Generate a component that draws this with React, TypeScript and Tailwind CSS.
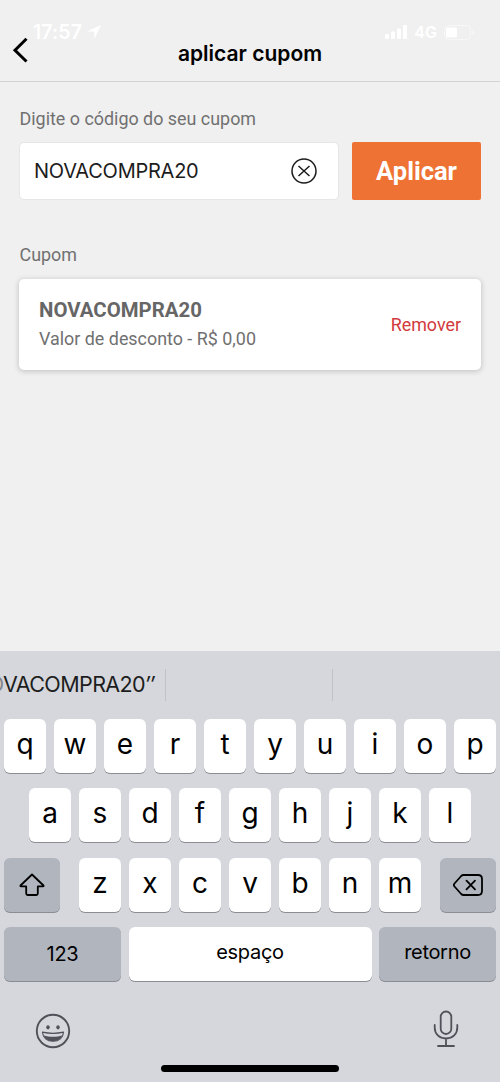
import clsx from 'clsx';
import type { ReactNode } from 'react';

const topRow = ['q', 'w', 'e', 'r', 't', 'y', 'u', 'i', 'o', 'p'];
const middleRow = ['a', 's', 'd', 'f', 'g', 'h', 'j', 'k', 'l'];
const bottomRow = ['z', 'x', 'c', 'v', 'b', 'n', 'm'];

interface KeyProps {
  children: ReactNode;
  className?: string;
  dark?: boolean;
}

const Key = ({ children, className, dark }: KeyProps) => (
  <button
    type="button"
    className={clsx(
      'flex h-[54px] shrink-0 items-center justify-center rounded-md text-black shadow-[0_1px_0_#8b8d92]',
      dark ? 'bg-[#b1b5be]' : 'bg-white',
      className
    )}
  >
    {children}
  </button>
);

const LetterKey = ({ letter }: { letter: string }) => (
  <Key className="w-[42px] pb-1 text-[28px] leading-none font-normal">{letter}</Key>
);

const StatusBar = () => (
  <div className="flex h-4 items-center justify-between pr-[26px] pl-[33px] text-white">
    <div className="flex items-center gap-[5px]">
      <span className="pt-0.5 text-[19.5px] leading-none font-semibold tracking-[0.1px]">17:57</span>
      <svg width="14" height="14" viewBox="0 0 14 14" fill="currentColor">
        <path d="M14 0 0 6.500h7.300V14z" />
      </svg>
    </div>
    <div className="flex items-center gap-[7px]">
      <svg width="22" height="14" viewBox="0 0 22 14" fill="currentColor">
        <rect x="0" y="9" width="4" height="5" rx="1" />
        <rect x="6" y="6.5" width="4" height="7.5" rx="1" />
        <rect x="12" y="3.5" width="4" height="10.5" rx="1" />
        <rect x="18" y="0" width="4" height="14" rx="1" />
      </svg>
      <span className="text-[16px] leading-none font-semibold">4G</span>
      <svg width="30" height="15" viewBox="0 0 30 15" fill="none">
        <rect x="0.5" y="0.5" width="26" height="14" rx="4" stroke="#f7f7f7" />
        <rect x="2" y="2.5" width="11" height="10" rx="1.5" fill="currentColor" />
        <path d="M28.500 5v5c1-.6 1.500-1.500 1.500-2.500S29.500 5.600 28.500 5z" fill="#f7f7f7" />
      </svg>
    </div>
  </div>
);

const Header = () => (
  <header className="h-[82px] border-b border-[#d4d4d4] pt-6">
    <StatusBar />
    <div className="grid grid-cols-[60px_1fr_60px] items-start">
      <button type="button" className="-mt-[3px] ml-3 w-4">
        <svg width="16" height="26" viewBox="0 0 16 26" fill="none" stroke="#000" strokeWidth="3">
          <path d="M14.500 1.800 3 13.200l11.500 11.300" />
        </svg>
      </button>
      <h1 className="text-center text-[21px] leading-7 font-semibold text-black">aplicar cupom</h1>
    </div>
  </header>
);

const CouponForm = () => (
  <section>
    <label className="block pl-[0.5px] text-[17.9px] leading-[25px] text-[#707070]">Digite o código do seu cupom</label>
    <div className="mt-[11px] flex gap-[13px]">
      <div className="flex h-[58px] flex-1 items-center justify-between rounded-[5px] border border-[#e6e6e6] bg-white pr-[21px] pl-[14px]">
        <span className="font-['Inter',sans-serif] text-[20px] tracking-[-0.25px] text-[#1c1c1c]">NOVACOMPRA20</span>
        <svg width="26" height="26" viewBox="0 0 26 26" fill="none" stroke="#1c1c1c" strokeWidth="1.5">
          <circle cx="13" cy="13" r="12" />
          <path d="m7.500 8 11 10M18.500 8l-11 10" />
        </svg>
      </div>
      <button type="button" className="h-[58px] w-[129px] rounded-[2px] bg-[#ee7234] text-[25.5px] font-bold text-white">
        Aplicar
      </button>
    </div>
  </section>
);

const CouponCard = () => (
  <section className="mt-[43px]">
    <h2 className="pl-[0.5px] text-[17.9px] leading-6 text-[#707070]">Cupom</h2>
    <div className="mt-3 flex h-[91px] items-center justify-between rounded-[5px] bg-white px-5 shadow-[0_1px_5px_1px_rgba(0,0,0,0.16)]">
      <div className="pt-px">
        <p className="text-[20.4px] leading-7 font-bold text-[#666]">NOVACOMPRA20</p>
        <p className="text-[17.9px] leading-[30px] text-[#707070]">Valor de desconto - R$ 0,00</p>
      </div>
      <button type="button" className="text-[17.9px] leading-[27px] text-[#d3393c]">Remover</button>
    </div>
  </section>
);

const Keyboard = () => (
  <section className="flex h-[431px] flex-col bg-[#d5d7dd] font-['Inter',sans-serif]">
    <div className="flex h-[68px] items-center">
      <div className="flex h-8 w-[166px] justify-end overflow-hidden border-r border-[#c0c2c8] pr-[11px]">
        <span className="text-[21.5px] leading-[31px] tracking-[-0.6px] whitespace-nowrap text-[#1d1d20]">
          <span className="text-[#85868b]">“NO</span>VACOMPRA20<span className="italic">″</span>
        </span>
      </div>
      <div className="h-8 w-[167px] border-r border-[#c0c2c8]" />
    </div>

    <div className="flex flex-col gap-[15.3px] px-1">
      <div className="flex gap-2">
        {topRow.map((letter) => <LetterKey key={letter} letter={letter} />)}
      </div>
      <div className="flex justify-center gap-2">
        {middleRow.map((letter) => <LetterKey key={letter} letter={letter} />)}
      </div>
      <div className="flex justify-between">
        <Key dark className="w-14">
          <svg width="26" height="24" viewBox="0 0 26 24" fill="none" stroke="#000" strokeWidth="1.8" strokeLinejoin="round">
            <path d="M13 1.500 1.500 12.500c-.3.400-.1.800.4.800h5.300v7.200c0 1 .5 1.500 1.500 1.500h8.600c1 0 1.500-.5 1.500-1.500v-7.200h5.300c.5 0 .7-.4.4-.8z" />
          </svg>
        </Key>
        <div className="flex gap-2">
          {bottomRow.map((letter) => <LetterKey key={letter} letter={letter} />)}
        </div>
        <Key dark className="w-14">
          <svg width="30" height="22" viewBox="0 0 30 22" fill="none" stroke="#000" strokeWidth="1.8" strokeLinejoin="round" strokeLinecap="round">
            <path d="M10.500 1H25c2.500 0 4 1.500 4 4v12c0 2.500-1.500 4-4 4H10.500c-1 0-1.600-.3-2.300-1L1.500 12.500c-.8-.9-.8-2.100 0-3L8.200 2c.7-.7 1.300-1 2.300-1z" />
            <path d="m13.500 6.700 8.500 8.600M22 6.700l-8.500 8.600" />
          </svg>
        </Key>
      </div>
      <div className="flex justify-between text-[20px] tracking-[-0.3px]">
        <Key dark className="w-[117px]">123</Key>
        <Key className="w-[243px] pb-[3px]">espaço</Key>
        <Key dark className="w-[117px] pb-[3px]">retorno</Key>
      </div>
    </div>

    <div className="mt-[29px] flex items-center justify-between pr-[41px] pl-[35px] text-[#505159]">
      <svg className="mt-[3px]" width="36" height="36" viewBox="0 0 36 36" fill="none" stroke="currentColor">
        <circle cx="18" cy="18" r="16.2" strokeWidth="1.9" />
        <ellipse cx="13" cy="14.3" rx="1.7" ry="2.1" fill="currentColor" stroke="none" />
        <ellipse cx="23" cy="14.3" rx="1.7" ry="2.1" fill="currentColor" stroke="none" />
        <path d="M7.500 19.200c6.800 1.500 14.200 1.500 21 0-.4 5.500-4.500 9-10.500 9s-10.100-3.500-10.500-9z" strokeWidth="1.2" strokeLinejoin="round" />
        <path d="M8.500 22.300c6 2 13 2 19 0-1.500 3.800-4.800 5.900-9.500 5.900s-8-2.100-9.500-5.900z" fill="currentColor" stroke="none" />
      </svg>
      <svg width="26" height="38" viewBox="0 0 26 38" fill="none" stroke="currentColor" strokeWidth="1.8" strokeLinecap="round">
        <rect x="7.7" y="1.5" width="10.6" height="22.5" rx="5.3" />
        <path d="M1.700 15v2.500C1.700 24 6.200 28.500 13 28.500S24.300 24 24.300 17.500V15M13 28.500V36M5 36h16" />
      </svg>
    </div>
    <div className="mx-auto mt-auto mb-[10px] h-[7px] w-[178px] rounded-full bg-black" />
  </section>
);

const App = () => (
  <div className="flex h-[1082px] w-[500px] flex-col overflow-hidden bg-[#f0f0f0] font-['Roboto',sans-serif]">
    <div className="font-['Inter',sans-serif]">
      <Header />
    </div>
    <main className="flex-1 px-[19px] pt-6">
      <CouponForm />
      <CouponCard />
    </main>
    <Keyboard />
  </div>
);

export default App;
